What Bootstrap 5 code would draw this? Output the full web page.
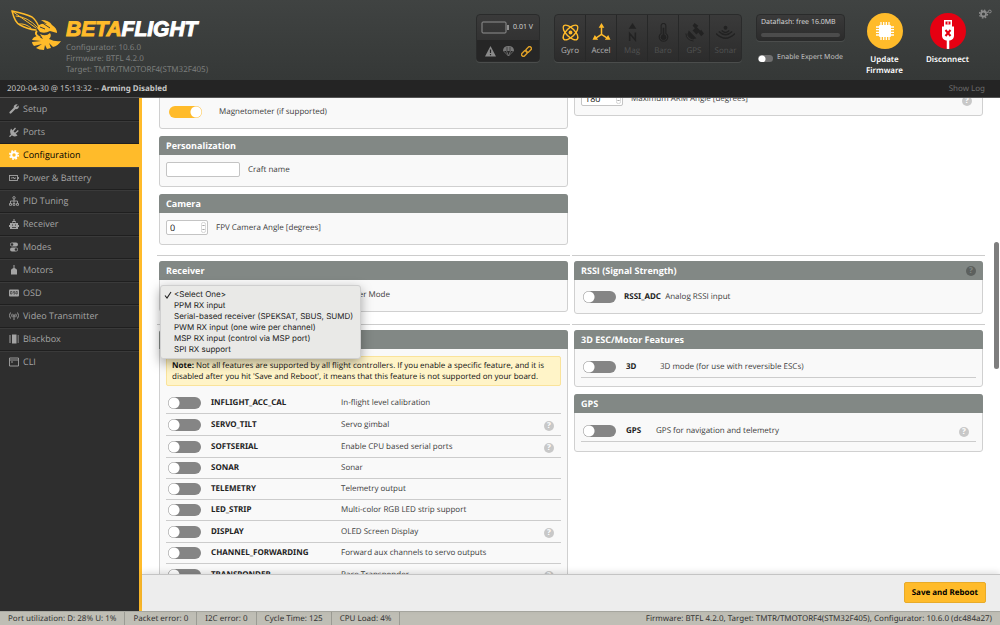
<!DOCTYPE html>
<html lang="en">
<head>
<meta charset="utf-8">
<meta name="viewport" content="width=device-width, initial-scale=1">
<title>Betaflight Configurator</title>
<link rel="stylesheet" href="https://cdn.jsdelivr.net/npm/bootstrap@5.3.0/dist/css/bootstrap.min.css">
<style>
:root { --accent: #ffbb2a; --slate: #828885; }
body { font-family: "Noto Sans", "Open Sans", sans-serif; font-size: 8px; line-height: 12px; color: #3c3c3c; background: #fff; text-rendering: geometricPrecision; }
svg { display: block; flex: none; }
label { cursor: pointer; }
input, select, button { text-rendering: inherit; }

/* top bar */
.topbar { height: 80px; background: linear-gradient(#404342, #353837); padding: 0 8px 0 10px; }
.brand-art { width: 52px; height: 44px; margin-top: 8px; }
.brand-name { font: italic 700 21px/24px "Liberation Sans", sans-serif; -webkit-text-stroke: 1px; color: #fff; margin-top: 18px; }
.brand-name span { color: var(--accent); }
.brand-info { line-height: 11px; color: #7c7e7d; white-space: nowrap; }
.panel { background: linear-gradient(#3a3a3a, #2c2c2c); border: 1px solid #2a2b2b; border-radius: 4px; box-shadow: 0 1px 0 #4b4d4c; overflow: hidden; }
.gap-side { margin-right: 14px; }
.panel-power { width: 64px; height: 48px; color: #d0d0d0; font-size: 7px; }
.panel-power .lamps { background: #262626; height: 22px; }
.sensor { width: 31px; height: 46px; color: #515252; border-right: 1px solid #272828; padding-top: 8px; font-family: "Open Sans", sans-serif; }
.sensor:last-child { border-right: 0; }
.sensor svg { color: #222; }
.sensor.live { color: #b4b4b4; }
.sensor.live svg { color: var(--accent); }
.sensor span { line-height: 12px; margin-top: 3px; }
.flash-col { width: 89px; margin-right: 8px; font-size: 7px; }
.flash { height: 27px; padding: 2px 4px; color: #d4d4d4; }
.flash-bar { height: 4px; border-radius: 2px; background: #4c4c4c; }
.expert { color: #c0c0c0; margin-top: 11px; }
.round-action { width: 63px; background: none; border: 0; padding: 0; color: #fff; font-size: 8px; font-weight: 600; line-height: 11px; }
.disc { width: 36px; height: 36px; border-radius: 50%; background: var(--accent); margin-bottom: 5px; overflow: hidden; }
.disc.stop { background: #e60012; }
.plain { background: none; border: 0; padding: 0; color: #8c8c8c; }

.logbar { height: 18px; background: #242424; color: #c4c4c4; padding: 0 15px 0 7px; border-bottom: 1px solid #555; }
.logbar a { color: #6c6c6c; text-decoration: none; }

/* sidebar */
.side { width: 142px; flex: none; background: #2e2e2e; border-right: 3px solid var(--accent); font-family: "Open Sans", sans-serif; }
.side a { height: 23px; padding: 0 0 1px 9px; gap: 4px; font-size: 9px; color: #a4a4a4; text-decoration: none; border-top: 1px solid #3a3a3a; border-bottom: 1px solid #1f1f1f; }
.side a:first-child { border-top-color: #2e2e2e; }
.side a:last-child { border-bottom-color: #2e2e2e; }
.side a.active { background: var(--accent); border-color: var(--accent); color: #000; }
.side a.active svg { color: #fff; }

/* settings pane */
.scroller { flex: 1 1 0; min-height: 0; overflow: hidden; padding: 0 15px; font-family: "Open Sans", sans-serif; }
.scrolled { margin-top: -41px; }
.band { border-top: 1px solid #ccc; padding: 5px 2px 0; }
.band.upper { height: 198px; border: 0; }
.band.mid { height: 69px; }
.box { background: #f9f9f9; border: 1px solid #d0d0d0; border-radius: 3px; margin-bottom: 7px; }
.box h2 { height: 19px; margin: -1px -1px 0; padding: 0 7px; border-radius: 3px 3px 0 0; background: var(--slate); color: #fff; font-size: 9px; font-weight: 700; line-height: 19px; }
.box-body { padding: 7px 6px 9px; gap: 8px; }
.field { border: 1px solid #c4c4c4; border-radius: 2px; background: #fff; height: 15px; padding: 0 3px; color: #111; font-size: 9px; line-height: 12px; }
.field.name { width: 74px; }
.num { width: 42px; position: relative; }
.num .field { width: 100%; }
.num svg { position: absolute; right: 2px; top: 2px; }
.tick { appearance: none; width: 33px; height: 12px; margin: 0 0 0 2px; border-radius: 6px; background: radial-gradient(circle at 6px 6px, #fff 5px, #858585 6px); flex: none; display: block; }
.tick:checked { background: radial-gradient(circle at 27px 6px, #fff 5px, var(--accent) 6px); }
.tick.mini { width: 15px; height: 7px; margin: 0 4px 0 2px; background: radial-gradient(circle at 4px 4px, #fff 3px, #707070 4px); }
.help { width: 10px; height: 10px; border-radius: 50%; background: #c8c8c8; color: #fff; font-size: 8px; font-weight: 700; line-height: 10px; text-align: center; display: inline-block; }
.help.dark { background: #5c605e; color: #828885; }
.notice { background: #fff4c8; border: 1px solid #fae39a; border-radius: 2px; padding: 3px 5px 2px; line-height: 11px; color: #111; margin: 0; height: 30px; }
.opts { width: 100%; table-layout: fixed; margin-top: 6px; }
.opts tr { height: 21px; border-bottom: 1px solid #ccc; }
.opts tr.tall { height: 22px; }
.opts td { padding: 1px 0 0; vertical-align: middle; white-space: nowrap; }
.key { font-weight: 700; font-family: "Noto Sans", sans-serif; color: #222; }
.opts .tip { text-align: right; padding: 4px 7px 0 0; line-height: 10px; }
.mode-menu { position: absolute; left: 0; top: 23px; width: 201px; padding: 3px 0; margin: 0; display: block; z-index: 3; background: #e9e9e7; border: 1px solid #cfcfcf; border-radius: 3px; box-shadow: 0 4px 12px rgba(0,0,0,.35); font-family: "Inter", sans-serif; min-width: 0; }
.mode-menu button { font-size: 8px; line-height: 11px; padding: 0 0 0 13px; color: #222; position: relative; }
.mode-menu svg { position: absolute; left: 3px; top: 2px; }
.thumb { position: absolute; right: 1px; top: 28%; width: 5px; height: 127px; border-radius: 3px; background: #7e7e7e; }
.toolbar { height: 37px; flex: none; background: #ededed; border-top: 1px solid #c4c4c4; box-shadow: 0 -2px 6px rgba(0,0,0,.12); padding: 0 14px 1px 0; z-index: 1; }
.save { background: var(--accent); border: 1px solid #e8ab29; border-radius: 2px; font-size: 8px; font-weight: 700; line-height: 19px; padding: 0 7px; color: #000; }
.statusbar { height: 14px; background: #bfbeb5; border-top: 1px solid #a9a9a2; color: #333; }
.statusbar span { padding: 0 8px; line-height: 13px; white-space: nowrap; }
.statusbar .cell { border-right: 1px solid #9b9b94; }
</style>
<script src="https://cdn.jsdelivr.net/npm/bootstrap@5.3.0/dist/js/bootstrap.bundle.min.js"></script>
</head>
<body class="vh-100 d-flex flex-column overflow-hidden">

<header class="topbar d-flex align-items-start">
  <svg class="brand-art" viewBox="0 0 52 44" aria-label="Betaflight wasp">
    <g fill="none" stroke="#ffbb2a" stroke-width="1.500" stroke-linejoin="round" stroke-linecap="round"><path d="M2 3Q5 15 10 17 17 21 26 22M2 3Q16 6 22 9 26 12 29 19"/><path d="M2 3 26 20M6 8Q18 9 27 19M9 16Q15 15 21 20" stroke-width="1"/></g>
    <path d="M31 12Q39 12 42 17 47 20 47 25L40 23Q35 26 30 24L27 20Q28 16 34 15.500L37 16zM34 13 43 16" fill="#ffbb2a"/>
    <path d="M27 23Q24 26 29 29L26 31" fill="none" stroke="#ffbb2a" stroke-width="2"/>
    <path d="M30 26Q36 29 40 25 42 28 39 31 45 34 51 33 48 38 43 39L39 35 41 40 37 41 35 37 34 42Q29 42 26 40L32 36 24 38Q22 36 22 34L31 33 22 32Q23 29 27 28L33 31z" fill="#ffbb2a"/>
    <path d="m31 14 9 6M30 19l5 2" stroke="#3b3e3d" stroke-width="1"/>
  </svg>
  <div class="ms-1">
    <div class="brand-name"><span>BETA</span>FLIGHT</div>
    <div class="brand-info">Configurator: 10.6.0<br>Firmware: BTFL 4.2.0<br>Target: TMTR/TMOTORF4(STM32F405)</div>
  </div>

  <div class="d-flex ms-auto" style="padding-top:14px">
    <div class="panel panel-power gap-side">
      <div class="d-flex align-items-center gap-1 ps-1" style="height:25px">
        <svg width="28" height="13" viewBox="0 0 28 13" fill="none" stroke="#909090"><rect x="1" y="1" width="24" height="11" rx="1"/><path d="M27 4v5" stroke-width="2"/></svg>
        <span class="text-nowrap">0.01 V</span>
      </div>
      <div class="lamps d-flex align-items-center justify-content-around px-1">
        <svg width="11" height="11" viewBox="0 0 11 11"><path d="M5.500 0 11 10.500H0z" fill="#8a8a8a"/><path d="M5.500 3.500v3.500M5.500 8v1.300" stroke="#262626" stroke-width="1.200"/></svg>
        <svg width="11" height="11" viewBox="0 0 11 11" fill="none" stroke="#777"><path d="M0 5Q0 0 5.500 0T11 5z" fill="#777" stroke="none"/><path d="M.5 5 5.500 10 10.500 5M3.500 5l2 5 2-5" stroke-width=".8"/><path d="M4 1v4M7 1v4" stroke="#262626" stroke-width=".6"/></svg>
        <svg width="11" height="11" viewBox="0 0 12 12" fill="none" stroke="#e0a128" stroke-width="1.500"><rect x="4.800" y="1.800" width="7" height="4" rx="2" transform="rotate(-45 8.300 3.800)"/><rect x=".2" y="6.200" width="7" height="4" rx="2" transform="rotate(-45 3.700 8.200)"/></svg>
      </div>
    </div>
    <div class="panel d-flex gap-side" style="height:48px">
      <div class="sensor live d-flex flex-column align-items-center"><svg width="19" height="19" viewBox="0 0 20 20" fill="none" stroke="currentColor" stroke-width="1.500"><ellipse cx="10" cy="10" rx="10" ry="4.500" transform="rotate(45 10 10)"/><ellipse cx="10" cy="10" rx="10" ry="4.500" transform="rotate(-45 10 10)"/><circle cx="10" cy="10" r="2" fill="currentColor" stroke="none"/></svg><span>Gyro</span></div>
      <div class="sensor live d-flex flex-column align-items-center"><svg width="19" height="19" viewBox="0 0 20 20" fill="none" stroke="currentColor" stroke-width="1.600"><path d="M10 3v9L4 16M10 12l6 4"/><path d="M10 0 13 5H7zM.5 17.500 3 12.500 6.500 17.500zM19.500 17.500 17 12.500 13.500 17.500z" fill="currentColor" stroke="none"/></svg><span>Accel</span></div>
      <div class="sensor d-flex flex-column align-items-center"><svg width="19" height="19" viewBox="0 0 20 20"><path d="M10 0 14 6H6z" fill="currentColor"/><path d="M7 19v-8l6 7v-8" fill="none" stroke="currentColor" stroke-width="1.600"/></svg><span>Mag</span></div>
      <div class="sensor d-flex flex-column align-items-center"><svg width="19" height="19" viewBox="0 0 20 20" fill="none" stroke="currentColor"><path d="M7.500 11V3a2.500 2.500 0 0 1 5 0v8a4.500 4.500 0 1 1-5 0z" stroke-width="1.200"/><path d="M10 5v8" stroke-width="1.800"/><circle cx="10" cy="15" r="2.500" fill="currentColor"/></svg><span>Baro</span></div>
      <div class="sensor d-flex flex-column align-items-center"><svg width="19" height="19" viewBox="0 0 20 20" fill="currentColor"><path d="m10 0 4 3-3 3-3-3zM17 7l3 4-3 3-3-4zM12 4l4 4-4 4-4-4zM4 8l8 8q-4 2-7-1T4 8z"/><path d="M1 11q0 7 8 8M3 11q0 5 6 6" fill="none" stroke="currentColor" stroke-width="1"/></svg><span>GPS</span></div>
      <div class="sensor d-flex flex-column align-items-center"><svg width="19" height="19" viewBox="0 0 20 20" fill="none" stroke="currentColor" stroke-width="1.500"><path d="M0 11q10 10 20 0M3 9q7 7 14 0M6 8q4 4 8 0"/><circle cx="10" cy="5" r="2" fill="currentColor" stroke="none"/></svg><span>Sonar</span></div>
    </div>
    <div class="flash-col">
      <div class="panel flash"><div class="text-nowrap">Dataflash: free 16.0MB</div><div class="flash-bar mt-1"></div></div>
      <div class="expert d-flex align-items-center"><input class="tick mini" type="checkbox" id="expert"><label class="text-nowrap" for="expert">Enable Expert Mode</label></div>
    </div>
  </div>
  <button class="round-action d-flex flex-column align-items-center" style="margin-top:13px" type="button"><span class="disc d-flex align-items-center justify-content-center"><svg width="20" height="20" viewBox="0 0 20 20" fill="#fff"><rect x="4" y="4" width="12" height="12" rx="1"/><path d="M6 1v18M8.700 1v18M11.300 1v18M14 1v18M1 6h18M1 8.700h18M1 11.300h18M1 14h18" stroke="#fff" stroke-width="1.300"/></svg></span>Update<br>Firmware</button>
  <button class="round-action d-flex flex-column align-items-center" style="margin-top:13px" type="button"><span class="disc stop d-flex align-items-end justify-content-center"><svg width="14" height="30" viewBox="0 0 14 30"><path d="M3 1h8v7H3z" fill="#fff"/><path d="M4.500 2.500h5v3h-5z" fill="#e60012"/><path d="M7 2.500v3" stroke="#fff"/><path d="M1 7.500h12v9q0 4-4 5H5q-4-1-4-5z" fill="#fff"/><path d="M7 20v10" stroke="#fff" stroke-width="2.500"/><path d="m4.500 11 5 6m0-6-5 6" stroke="#e60012" stroke-width="2"/></svg></span>Disconnect</button>
  <button class="plain" style="margin-top:8px" type="button" aria-label="Options"><svg width="13" height="12" viewBox="0 0 13 12" fill="none" stroke="currentColor"><circle cx="4.500" cy="6" r="2.500" stroke-width="1.800"/><circle cx="4.500" cy="6" r="4" stroke-dasharray="1.600 1.540" stroke-width="1.300"/><circle cx="10.800" cy="3.500" r="1.400"/></svg></button>
</header>

<div class="logbar d-flex align-items-center justify-content-between"><div>2020-04-30 @ 15:13:32 -- <b>Arming Disabled</b></div><a href="#">Show Log</a></div>

<div class="d-flex flex-grow-1" style="min-height:0">
  <nav class="side">
    <a href="#" class="d-flex align-items-center"><svg width="10" height="10" viewBox="0 0 10 10"><path d="M1.500 8.500 6 4" stroke="currentColor" stroke-width="2.200" stroke-linecap="round"/><path d="M8.800.5 7 2.200 7.800 3 9.600 1.400Q10.300 3.500 8.700 4.700 7 5.700 5.300 4.500 4 2.800 5.500 1.200 7-.2 8.800.5z" fill="currentColor"/></svg>Setup</a>
    <a href="#" class="d-flex align-items-center"><svg width="10" height="10" viewBox="0 0 10 10" stroke="currentColor" stroke-width="1.300"><path d="M2 1.500 8.500 8.500Q5 10.500 2.500 8T2 1.500z" fill="currentColor" stroke="none"/><path d="M4 4 6.500 1M6 6.500 9.300 3.500M.5 9.700 3 7.200"/></svg>Ports</a>
    <a href="#" class="active d-flex align-items-center"><svg width="10" height="10" viewBox="0 0 10 10" fill="none" stroke="currentColor"><circle cx="5" cy="5" r="2.700" stroke-width="2"/><circle cx="5" cy="5" r="4.200" stroke-width="1.600" stroke-dasharray="1.750 1.550"/></svg>Configuration</a>
    <a href="#" class="d-flex align-items-center"><svg width="10" height="10" viewBox="0 0 10 10" fill="none" stroke="currentColor" stroke-width=".9"><rect x=".5" y="2.500" width="8" height="5"/><path d="M9.500 4v2M2 5h1.500l1-1 .7 2 .8-1h1"/></svg>Power &amp; Battery</a>
    <a href="#" class="d-flex align-items-center"><svg width="10" height="10" viewBox="0 0 10 10" fill="none" stroke="currentColor" stroke-width=".9"><circle cx="5" cy="1.800" r="1.200"/><path d="M5 3v4M1.500 7V5h7v2M.5 7.500h2v1.800h-2zM4 7.500h2v1.800H4zM7.500 7.500h2v1.800h-2z"/></svg>PID Tuning</a>
    <a href="#" class="d-flex align-items-center"><svg width="10" height="10" viewBox="0 0 10 10"><path d="M1 4h8v6H1zM0 6h10v2H0z" fill="currentColor"/><path d="M5 0v3M3.500 3.500V2.500h3v1" fill="none" stroke="currentColor"/><path d="M3 5.500h1v1H3zM6 5.500h1v1H6zM3 8h4v.8H3z" fill="#2e2e2e"/></svg>Receiver</a>
    <a href="#" class="d-flex align-items-center"><svg width="10" height="10" viewBox="0 0 10 10" fill="currentColor"><rect x="1" y=".5" width="8" height="4" rx="2"/><rect x="1" y="5.500" width="8" height="4" rx="2"/><circle cx="3" cy="2.500" r="1.300" fill="#2e2e2e"/><circle cx="7" cy="7.500" r="1.300" fill="#2e2e2e"/></svg>Modes</a>
    <a href="#" class="d-flex align-items-center"><svg width="10" height="10" viewBox="0 0 10 10" fill="currentColor"><path d="M4.500 0h1v3Q8 4 8 5v4.500H2V5q0-1 2.500-2z"/></svg>Motors</a>
    <a href="#" class="d-flex align-items-center"><svg width="10" height="10" viewBox="0 0 10 10"><rect y="1.500" width="10" height="7" rx="1" fill="currentColor"/><path d="M1.500 3.500h1.500v2.500H1.500zM6 3.500H4.500v1.200H6V6H4.500M7 3.500h1.300V6H7z" fill="none" stroke="#2e2e2e" stroke-width=".6"/></svg>OSD</a>
    <a href="#" class="d-flex align-items-center"><svg width="10" height="10" viewBox="0 0 10 10" fill="none" stroke="currentColor" stroke-width=".9"><circle cx="5" cy="4.500" r=".8"/><path d="M5 5v4M3.300 2.800q-1.300 1.700 0 3.400M6.700 2.800q1.300 1.700 0 3.400M1.500 1.500q-2.200 3 0 6M8.500 1.500q2.200 3 0 6"/></svg>Video Transmitter</a>
    <a href="#" class="d-flex align-items-center"><svg width="10" height="10" viewBox="0 0 10 10" fill="currentColor"><rect x="3" y=".5" width="4.500" height="9"/><path d="M0 2h2M0 4h2M0 6h2M0 8h2M8.500 2h2M8.500 4h2M8.500 6h2M8.500 8h2" stroke="currentColor"/></svg>Blackbox</a>
    <a href="#" class="d-flex align-items-center"><svg width="10" height="10" viewBox="0 0 10 10" fill="none" stroke="currentColor" stroke-width=".9"><path d="M.5 1h9v8h-9zM.5 3h9M2 5h2"/></svg>CLI</a>
  </nav>

  <main class="flex-grow-1 d-flex flex-column position-relative" style="min-width:0">
    <div class="scroller">
      <div class="scrolled row g-0">
        <div class="col-6" style="padding-right:1px">
          <section class="band upper">
            <div class="box"><h2>Other sensors</h2>
              <div class="d-flex align-items-center" style="margin:16px 7px 0;padding:6px 0 9px;border-top:1px solid #ccc;gap:17px;height:31px"><input class="tick" type="checkbox" id="mag" checked><label for="mag">Magnetometer (if supported)</label></div></div>
            <div class="box"><h2>Personalization</h2><div class="box-body d-flex align-items-center"><input class="field name" type="text" id="craft"><label for="craft">Craft name</label></div></div>
            <div class="box"><h2>Camera</h2><div class="box-body d-flex align-items-center"><div class="num"><input class="field" type="text" inputmode="numeric" id="fpv" value="0"><svg width="5" height="11" viewBox="0 0 5 11" fill="none" stroke="#777" stroke-width=".8"><rect x=".4" y=".4" width="4.200" height="10.200" rx="2" stroke="#ccc"/><path d="M1.500 4 2.500 3l1 1M1.500 7l1 1 1-1"/></svg></div><label for="fpv">FPV Camera Angle [degrees]</label></div></div>
          </section>
          <section class="band mid">
            <div class="box position-relative"><h2>Receiver</h2>
              <div class="box-body d-flex align-items-center"><select class="field" id="rxmode" style="width:161px"><option>&lt;Select One&gt;</option></select><label for="rxmode">Receiver Mode</label></div>
              <div class="dropdown-menu mode-menu show">
                <button class="dropdown-item" type="button"><svg width="8" height="8" viewBox="0 0 8 8" fill="none" stroke="#222" stroke-width="1.100"><path d="M1 4.500 3 7 7 1"/></svg>&lt;Select One&gt;</button>
                <button class="dropdown-item" type="button">PPM RX input</button>
                <button class="dropdown-item" type="button">Serial-based receiver (SPEKSAT, SBUS, SUMD)</button>
                <button class="dropdown-item" type="button">PWM RX input (one wire per channel)</button>
                <button class="dropdown-item" type="button">MSP RX input (control via MSP port)</button>
                <button class="dropdown-item" type="button">SPI RX support</button>
              </div>
            </div>
          </section>
          <section class="band">
            <div class="box"><h2>Other Features</h2>
              <div style="padding:7px 6px">
                <p class="notice"><b>Note:</b> Not all features are supported by all flight controllers. If you enable a specific feature, and it is disabled after you hit 'Save and Reboot', it means that this feature is not supported on your board.</p>
                <table class="opts">
                  <colgroup><col style="width:45px"><col style="width:130px"><col><col style="width:24px"></colgroup>
                  <tbody>
                  <tr><td><input class="tick" type="checkbox" id="f1"></td><td class="key"><label for="f1">INFLIGHT_ACC_CAL</label></td><td>In-flight level calibration</td><td></td></tr>
                  <tr class="tall"><td><input class="tick" type="checkbox" id="f2"></td><td class="key"><label for="f2">SERVO_TILT</label></td><td>Servo gimbal</td><td class="tip"><span class="help">?</span></td></tr>
                  <tr class="tall"><td><input class="tick" type="checkbox" id="f3"></td><td class="key"><label for="f3">SOFTSERIAL</label></td><td>Enable CPU based serial ports</td><td class="tip"><span class="help">?</span></td></tr>
                  <tr><td><input class="tick" type="checkbox" id="f4"></td><td class="key"><label for="f4">SONAR</label></td><td>Sonar</td><td></td></tr>
                  <tr><td><input class="tick" type="checkbox" id="f5"></td><td class="key"><label for="f5">TELEMETRY</label></td><td>Telemetry output</td><td></td></tr>
                  <tr><td><input class="tick" type="checkbox" id="f6"></td><td class="key"><label for="f6">LED_STRIP</label></td><td>Multi-color RGB LED strip support</td><td></td></tr>
                  <tr class="tall"><td><input class="tick" type="checkbox" id="f7"></td><td class="key"><label for="f7">DISPLAY</label></td><td>OLED Screen Display</td><td class="tip"><span class="help">?</span></td></tr>
                  <tr><td><input class="tick" type="checkbox" id="f8"></td><td class="key"><label for="f8">CHANNEL_FORWARDING</label></td><td>Forward aux channels to servo outputs</td><td></td></tr>
                  <tr class="tall"><td><input class="tick" type="checkbox" id="f9"></td><td class="key"><label for="f9">TRANSPONDER</label></td><td>Race Transponder</td><td class="tip"><span class="help">?</span></td></tr>
                  </tbody>
                </table>
              </div>
            </div>
          </section>
        </div>
        <div class="col-6" style="padding-left:1px">
          <section class="band upper">
            <div class="box"><h2>Arming</h2><div class="box-body d-flex align-items-center" style="padding-top:10px"><div class="num"><input class="field" type="text" inputmode="numeric" id="arm" value="180"><svg width="5" height="11" viewBox="0 0 5 11" fill="none" stroke="#777" stroke-width=".8"><rect x=".4" y=".4" width="4.200" height="10.200" rx="2" stroke="#ccc"/><path d="M1.500 4 2.500 3l1 1M1.500 7l1 1 1-1"/></svg></div><label for="arm">Maximum ARM Angle [degrees]</label><span class="help ms-auto me-1 mt-1">?</span></div></div>
          </section>
          <section class="band mid">
            <div class="box"><h2 class="d-flex align-items-center justify-content-between">RSSI (Signal Strength)<span class="help dark">?</span></h2><div class="box-body d-flex align-items-center" style="padding:11px 6px 10px"><input class="tick" type="checkbox" id="rssi"><label for="rssi"><span class="key">RSSI_ADC</span>&nbsp; Analog RSSI input</label></div></div>
          </section>
          <section class="band">
            <div class="box"><h2>3D ESC/Motor Features</h2><div style="padding:7px 6px 8px"><table class="opts mt-0"><colgroup><col style="width:45px"><col style="width:34px"><col><col style="width:24px"></colgroup><tbody><tr><td><input class="tick" type="checkbox" id="d3"></td><td class="key"><label for="d3">3D</label></td><td>3D mode (for use with reversible ESCs)</td><td></td></tr></tbody></table></div></div>
            <div class="box"><h2>GPS</h2><div style="padding:7px 6px 9px"><table class="opts mt-0"><colgroup><col style="width:45px"><col style="width:30px"><col><col style="width:24px"></colgroup><tbody><tr class="tall"><td><input class="tick" type="checkbox" id="gps"></td><td class="key"><label for="gps">GPS</label></td><td>GPS for navigation and telemetry</td><td class="tip"><span class="help">?</span></td></tr></tbody></table></div></div>
          </section>
        </div>
      </div>
    </div>
    <div class="thumb"></div>
    <div class="toolbar d-flex align-items-center justify-content-end"><button class="save" type="button">Save and Reboot</button></div>
  </main>
</div>

<footer class="statusbar d-flex">
  <span class="cell">Port utilization: D: 28% U: 1%</span><span class="cell">Packet error: 0</span><span class="cell">I2C error: 0</span><span class="cell">Cycle Time: 125</span><span class="cell">CPU Load: 4%</span>
  <span class="ms-auto">Firmware: BTFL 4.2.0, Target: TMTR/TMOTORF4(STM32F405), Configurator: 10.6.0 (dc484a27)</span>
</footer>
</body>
</html>
